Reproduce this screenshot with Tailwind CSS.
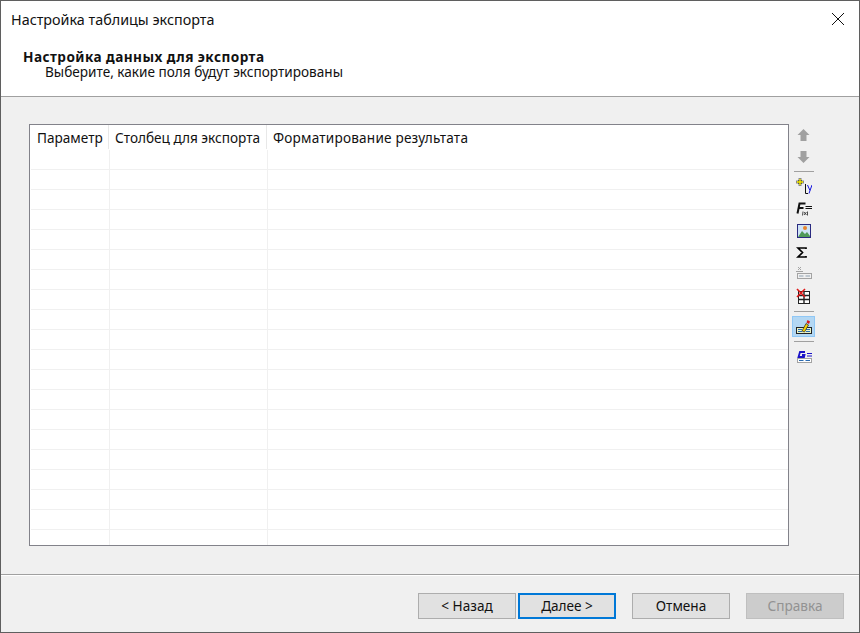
<!DOCTYPE html>
<html lang="ru">

<head>
    <meta charset="UTF-8" />
    <title>Настройка таблицы экспорта</title>
    <script src="https://cdn.jsdelivr.net/npm/@tailwindcss/browser@4"></script>
</head>

<body class="bg-[#f0f0f0]">
    <div class="w-[860px] h-[633px] flex flex-col border border-[#5f5f5f] bg-[#f0f0f0] font-['Noto_Sans',sans-serif] text-[13.6px] text-[#111] overflow-hidden">

        <!-- header -->
        <div class="h-[95px] shrink-0 bg-white border-b border-[#a0a0a0] box-content relative">
            <div class="pl-[10px] pt-[9px] h-[48px] text-[14.35px] leading-[20px]">Настройка таблицы экспорта</div>
            <div class="pl-[22px] font-bold tracking-[0.45px] leading-[15px] h-[15px]">Настройка данных для экспорта</div>
            <div class="pl-[44px] leading-[15px]">Выберите, какие поля будут экспортированы</div>
            <svg class="absolute right-[14px] top-[11px]" width="14" height="14" viewBox="0 0 14 14" fill="none" stroke="#111" stroke-width="1"><path d="M1 1L13 13M13 1L1 13" /></svg>
        </div>

        <!-- table and toolbar -->
        <div class="flex-1 flex pl-[28px] pt-[27px]">
            <div class="w-[760px] h-[422px] border border-[#82828a] bg-white overflow-hidden">
                <div class="flex h-[25px]">
                    <div class="w-[79px] pl-[7px] pt-[4px] leading-[18px] border-r border-[#e8e8e8] h-[24px]">Параметр</div>
                    <div class="w-[158px] pl-[6px] pt-[4px] leading-[18px] border-r border-[#e8e8e8] h-[24px]">Столбец для экспорта</div>
                    <div class="pl-[6px] pt-[4px] leading-[18px] tracking-[0.2px]">Форматирование результата</div>
                </div>
                <div id="rows"></div>
            </div>

            <div class="ml-[2px] w-[26px] flex flex-col items-center">
                <div class="h-[22px] w-[22px] flex items-center justify-center">
                    <svg width="16" height="16" viewBox="0 0 16 16"><path d="M7.5 2L13.5 8H10.5V14H4.5V8H1.5Z" fill="#a0a0a0" /></svg>
                </div>
                <div class="h-[22px] w-[22px] flex items-center justify-center">
                    <svg width="16" height="16" viewBox="0 0 16 16"><path d="M4.5 2H10.5V8H13.5L7.5 14L1.5 8H4.5Z" fill="#a0a0a0" /></svg>
                </div>
                <div class="w-[20px] h-px bg-[#a0a0a0] my-[3px]"></div>
                <div class="h-[22px] w-[22px] flex items-center justify-center">
                    <svg width="16" height="16" viewBox="0 0 16 16" fill="none">
                        <path d="M0.5 4H7.5M4 0.5V7.5" stroke="#222" stroke-width="3" stroke-dasharray="1 0.5" />
                        <path d="M1 4H7M4 1V7" stroke="#f6ea00" stroke-width="1.4" />
                        <path d="M9.5 6V15.5H12" stroke="#111" />
                        <path d="M11.5 7L14 12.5L16 7M14 12.5L13 15.5" stroke="#1212e0" />
                    </svg>
                </div>
                <div class="h-[22px] w-[22px] flex items-center justify-center">
                    <svg width="16" height="16" viewBox="0 0 16 16" fill="none">
                        <path d="M1.5 13.5L3.5 3.5H9.5M2.5 8H7.5" stroke="#111" stroke-width="2" />
                        <path d="M9.5 6.5H16M9.5 8.5H16" stroke="#111" />
                        <path d="M6.5 15.5L7 11.5M8 12L10.5 15M10.5 12L8 15M11.5 11.5L11.5 15.5" stroke="#222" stroke-width="0.8" />
                    </svg>
                </div>
                <div class="h-[22px] w-[22px] flex items-center justify-center">
                    <svg width="16" height="16" viewBox="0 0 16 16">
                        <rect x="1.5" y="2.5" width="13" height="13" fill="#cfe3f5" stroke="#2a2a80" />
                        <path d="M2 15L6 9L9 12L11 10L14 14V15Z" fill="#4f9a58" />
                        <circle cx="9" cy="6" r="2" fill="#e8842c" />
                    </svg>
                </div>
                <div class="h-[22px] w-[22px] flex items-center justify-center">
                    <svg width="16" height="16" viewBox="0 0 16 16" fill="none"><path d="M10 5V4H2L6.5 8.5L2 13H10V12" stroke="#000" stroke-width="1.7" /></svg>
                </div>
                <div class="h-[22px] w-[22px] flex items-center justify-center">
                    <svg width="16" height="16" viewBox="0 0 16 16" fill="none">
                        <path d="M2 1L5 4M5 1L2 4M0 5.5H7" stroke="#a3a3a3" />
                        <rect x="1.5" y="7.5" width="14" height="5" stroke="#a3a3a3" />
                        <path d="M3 10H7.5M9.5 10H14" stroke="#8ea0b0" />
                    </svg>
                </div>
                <div class="h-[22px] w-[22px] flex items-center justify-center">
                    <svg width="16" height="16" viewBox="0 0 16 16" fill="none">
                        <rect x="2.5" y="3.5" width="11" height="12" stroke="#222" fill="#fff" />
                        <path d="M3 7.5H13M3 11.5H13M8 4V15" stroke="#222" stroke-width="1.4" />
                        <path d="M1 1L9 9M9 1L1 9" stroke="#e01818" stroke-width="1.6" />
                    </svg>
                </div>
                <div class="w-[20px] h-px bg-[#a0a0a0] mt-[4px] mb-[4px]"></div>
                <div class="h-[21px] w-[23px] self-start ml-px flex items-center justify-center bg-[#b3d7f3] border border-[#90c8f6]">
                    <svg width="16" height="16" viewBox="0 0 16 16" fill="none">
                        <rect x="0.5" y="8.5" width="15" height="6" stroke="#222" fill="#e9f3c8" />
                        <path d="M2 10.5H6M2 12.5H6M10 10.5H14M10 12.5H14" stroke="#2a6ab0" />
                        <path d="M6 12L10 4.5L12.5 6L8.5 13Z" fill="#f4d000" stroke="#222" stroke-width="0.7" />
                        <path d="M10.5 3.5L11.5 1L14 2.5L13 5Z" fill="#d81818" />
                    </svg>
                </div>
                <div class="w-[20px] h-px bg-[#a0a0a0] mt-[4px] mb-[3px]"></div>
                <div class="h-[22px] w-[22px] flex items-center justify-center">
                    <svg width="16" height="16" viewBox="0 0 16 16" fill="none">
                        <path d="M9 4H4L2.5 9H8L8.5 7H6" stroke="#1a12c8" stroke-width="1.8" />
                        <path d="M11 5.5H16M11 8H16" stroke="#1a12c8" />
                        <rect x="1.5" y="10.5" width="14" height="4" fill="#fff" stroke="#a3a3a3" />
                        <path d="M3 12.5H7.5M9.5 12.5H14" stroke="#2a6ab0" />
                    </svg>
                </div>
            </div>
        </div>

        <!-- footer -->
        <div class="h-[58px] shrink-0 border-t border-[#a0a0a0] flex justify-end items-start pt-[18px] pr-[15px] shadow-[inset_0_1px_0_#fff]">
            <button class="w-[98px] h-[26px] bg-[#e1e1e1] border border-[#adadad]">&lt; Назад</button>
            <button class="w-[98px] h-[26px] ml-[2px] bg-[#e1e1e1] border-2 border-[#0078d7]">Далее &gt;</button>
            <button class="w-[98px] h-[26px] ml-[16px] bg-[#e1e1e1] border border-[#adadad]">Отмена</button>
            <button class="w-[98px] h-[26px] ml-[16px] bg-[#cccccc] border border-[#bfbfbf] text-[#929292]">Справка</button>
        </div>
    </div>

    <script>
        const rows = document.getElementById("rows");
        for (let i = 0; i < 20; i++) {
            const row = document.createElement("div");
            row.className = "flex h-[20px] ml-px border-b border-[#f0f0f0]";
            row.innerHTML = `
                <div class="w-[79px] border-r border-[#f0f0f0]"></div>
                <div class="w-[158px] border-r border-[#f0f0f0]"></div>
            `;
            rows.appendChild(row);
        }
    </script>
</body>

</html>
